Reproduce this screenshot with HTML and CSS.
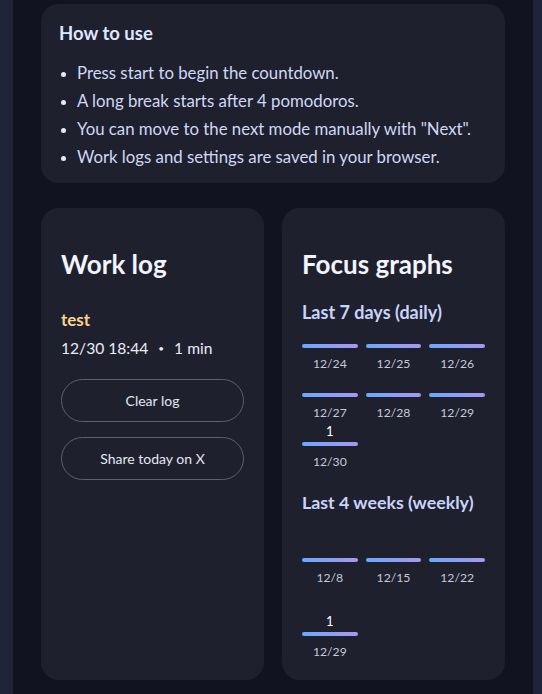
FILE: index.html
```html
<!DOCTYPE html>
<html lang="en">
<head>
<meta charset="utf-8">
<title>Pomodoro</title>
<link rel="stylesheet" href="styles.css">
</head>
<body>
<div class="page">
  <main class="column">
    <section class="panel howto">
      <h3 class="howto-title">How to use</h3>
      <ul class="howto-list">
        <li>Press start to begin the countdown.</li>
        <li>A long break starts after 4 pomodoros.</li>
        <li>You can move to the next mode manually with "Next".</li>
        <li>Work logs and settings are saved in your browser.</li>
      </ul>
    </section>

    <div class="cards">
      <section class="card">
        <h2 class="card-title">Work log</h2>
        <div class="log-entry">
          <div class="log-name">test</div>
          <div class="log-meta">12/30 18:44 <span class="dot">•</span> 1 min</div>
        </div>
        <div class="actions">
          <button class="pill">Clear log</button>
          <button class="pill">Share today on X</button>
        </div>
      </section>

      <section class="card">
        <h2 class="card-title">Focus graphs</h2>
        <h4 class="chart-title">Last 7 days (daily)</h4>
        <div class="chart daily">
          <div class="item"><div class="plot"><span class="val"></span><span class="bar"></span></div><span class="lbl">12/24</span></div>
          <div class="item"><div class="plot"><span class="val"></span><span class="bar"></span></div><span class="lbl">12/25</span></div>
          <div class="item"><div class="plot"><span class="val"></span><span class="bar"></span></div><span class="lbl">12/26</span></div>
          <div class="item"><div class="plot"><span class="val"></span><span class="bar"></span></div><span class="lbl">12/27</span></div>
          <div class="item"><div class="plot"><span class="val"></span><span class="bar"></span></div><span class="lbl">12/28</span></div>
          <div class="item"><div class="plot"><span class="val"></span><span class="bar"></span></div><span class="lbl">12/29</span></div>
          <div class="item"><div class="plot"><span class="val">1</span><span class="bar"></span></div><span class="lbl">12/30</span></div>
        </div>
        <h4 class="chart-title second">Last 4 weeks (weekly)</h4>
        <div class="chart weekly">
          <div class="item"><div class="plot"><span class="val"></span><span class="bar"></span></div><span class="lbl">12/8</span></div>
          <div class="item"><div class="plot"><span class="val"></span><span class="bar"></span></div><span class="lbl">12/15</span></div>
          <div class="item"><div class="plot"><span class="val"></span><span class="bar"></span></div><span class="lbl">12/22</span></div>
          <div class="item"><div class="plot"><span class="val">1</span><span class="bar"></span></div><span class="lbl">12/29</span></div>
        </div>
      </section>
    </div>
  </main>
</div>
</body>
</html>
```

FILE: styles.css
```css
* { box-sizing: border-box; }

html, body {
  margin: 0;
  padding: 0;
  height: 100%;
}

body {
  background: #1f2438;
  font-family: "Lato", "Liberation Sans", sans-serif;
  color: #d3dbf5;
}

.page {
  display: flex;
  padding-left: 13px;
  height: 694px;
  overflow: hidden;
}

.column {
  width: 520px;
  background: #121320;
  padding: 4px 28px 14px;
  display: flex;
  flex-direction: column;
  gap: 25px;
}

.panel {
  background: #1f202d;
  border-radius: 18px;
}

.howto {
  padding: 18px 18px 12px;
  height: 179px;
}

.howto-title {
  margin: 0 0 15px;
  font-size: 18.5px;
  line-height: 22px;
  font-weight: 700;
  color: #dfe6ff;
}

.howto-list {
  margin: 0;
  padding-left: 18px;
  font-size: 16.8px;
  line-height: 28px;
  color: #cfd8f6;
}

.howto-list li::marker {
  color: #e6e9f5;
  font-size: 14px;
}

.cards {
  display: grid;
  grid-template-columns: 1fr 1fr;
  gap: 18px;
  height: 472px;
}

.card {
  background: #1f202d;
  border-radius: 18px;
  padding: 40px 20px 18px;
}

.card-title {
  margin: 0;
  font-size: 26px;
  line-height: 32px;
  font-weight: 700;
  color: #f2f4ff;
}

.log-entry {
  margin-top: 29px;
}

.log-name {
  font-size: 17px;
  line-height: 22px;
  font-weight: 700;
  color: #fbd38d;
}

.log-meta {
  margin-top: 6px;
  font-size: 15.6px;
  line-height: 22px;
  color: #e9ecf7;
}

.dot {
  font-size: 10px;
  margin: 0 6px;
  vertical-align: 2px;
}

.actions {
  margin-top: 20px;
  display: flex;
  flex-direction: column;
  gap: 15px;
}

.pill {
  height: 43px;
  width: 100%;
  border-radius: 22px;
  border: 1px solid #5d6070;
  background: transparent;
  color: #e3e7f4;
  font-family: inherit;
  font-size: 14px;
}

.chart-title {
  margin: 21px 0 3px;
  font-size: 18px;
  line-height: 22px;
  font-weight: 700;
  color: #c9d4fb;
}

.chart-title.second {
  margin-top: 20px;
  margin-bottom: 2px;
  font-size: 17.8px;
}

.chart {
  display: grid;
  grid-template-columns: repeat(3, 1fr);
  column-gap: 8px;
  row-gap: 2px;
}

.item {
  display: flex;
  flex-direction: column;
}

.plot {
  height: 22px;
  display: flex;
  flex-direction: column;
  justify-content: flex-end;
  align-items: stretch;
}

.weekly .plot { height: 47px; }

.val {
  text-align: center;
  font-size: 13px;
  line-height: 14px;
  margin-bottom: 4px;
  color: #ffffff;
}

.bar {
  display: block;
  height: 4px;
  border-radius: 2px;
  background: linear-gradient(90deg, #6aa9fd, #a797f1);
}

.lbl {
  margin-top: 7px;
  text-align: center;
  font-size: 12.2px;
  line-height: 18px;
  color: #c4c9dc;
}
```
